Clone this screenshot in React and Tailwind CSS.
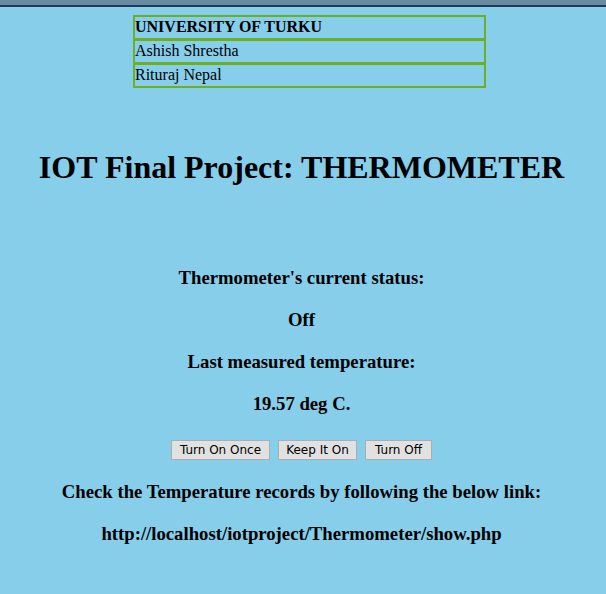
import React from "react";

export default function App() {
  const serif = { fontFamily: '"Liberation Serif", "Times New Roman", serif' };

  return (
    <div className="min-h-[594px] w-full bg-[#87ceeb] text-black" style={serif}>
      {/* window frame strip */}
      <div className="h-[7px] bg-[#6a8ca3] border-b-2 border-[#1d3b52]" />

      <div className="ml-[133px] mt-[8px] w-[353px]">
        <div className="h-[25px] border-2 border-[#6cae24] text-[16px] leading-[20px] font-bold">
          UNIVERSITY OF TURKU
        </div>
        <div className="-mt-px h-[25px] border-2 border-[#6cae24] text-[16px] leading-[20px]">
          Ashish Shrestha
        </div>
        <div className="-mt-px h-[25px] border-2 border-[#6cae24] text-[16px] leading-[20px]">
          Rituraj Nepal
        </div>
      </div>

      <div className="pr-[3px]">
        <h1 className="mt-[61px] text-center text-[32px] leading-[37px] font-bold">
          IOT Final Project: THERMOMETER
        </h1>

        <div className="mt-[81px] flex flex-col items-center gap-[21px] text-[18.72px] leading-[21px] font-bold">
          <h3>Thermometer's current status:</h3>
          <h3>Off</h3>
          <h3>Last measured temperature:</h3>
          <h3>19.57 deg C.</h3>
        </div>

        <div
          className="mt-[26px] flex justify-center gap-[8px] text-[13px]"
          style={{ fontFamily: '"DejaVu Sans", "Liberation Sans", sans-serif' }}
        >
          <button className="h-[20px] w-[99px] border border-[#adadad] bg-[#e1e1e1] text-[12px] leading-[18px]">
            Turn On Once
          </button>
          <button className="h-[20px] w-[79px] border border-[#adadad] bg-[#e1e1e1] text-[12px] leading-[18px]">
            Keep It On
          </button>
          <button className="h-[20px] w-[67px] border border-[#adadad] bg-[#e1e1e1] text-[12px] leading-[18px]">
            Turn Off
          </button>
        </div>

        <div className="mt-[21px] flex flex-col items-center gap-[21px] text-[18.72px] leading-[21px] font-bold">
          <h3>Check the Temperature records by following the below link:</h3>
          <h3>http://localhost/iotproject/Thermometer/show.php</h3>
        </div>
      </div>
    </div>
  );
}
